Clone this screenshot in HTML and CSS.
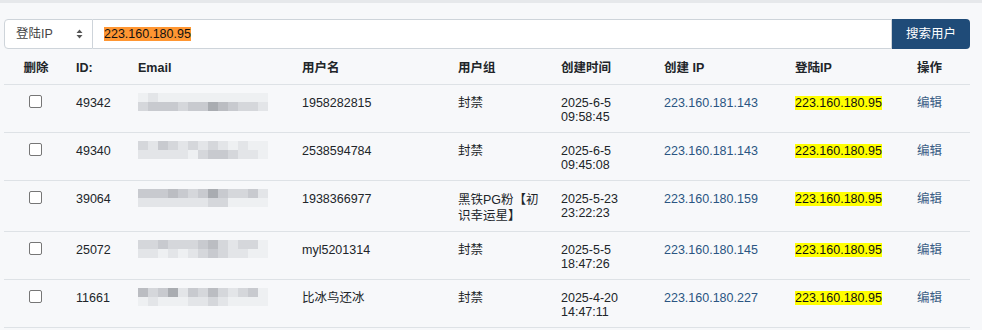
FILE: index.html
```html
<!DOCTYPE html>
<html lang="zh">
<head>
<meta charset="utf-8">
<title>用户搜索</title>
<link rel="stylesheet" href="styles.css">
</head>
<body>
<div class="page">
  <div class="search">
    <div class="select">
      <span>登陆IP</span>
      <svg class="arrows" width="7" height="10" viewBox="0 0 7 10"><path d="M3.5 0.5 L6.5 4 L0.5 4 Z M0.5 6 L6.5 6 L3.5 9.5 Z" fill="#555"/></svg>
    </div>
    <div class="input"><span class="hl-find">223.160.180.95</span></div>
    <button class="btn">搜索用户</button>
  </div>
  <table class="users">
    <colgroup>
      <col class="c-del"><col class="c-id"><col class="c-mail"><col class="c-name"><col class="c-group"><col class="c-time"><col class="c-cip"><col class="c-lip"><col class="c-op">
    </colgroup>
    <thead>
      <tr><th class="center">删除</th><th>ID:</th><th>Email</th><th>用户名</th><th>用户组</th><th>创建时间</th><th>创建 IP</th><th>登陆IP</th><th>操作</th></tr>
    </thead>
    <tbody>
      <tr>
        <td class="center"><span class="cb"></span></td>
        <td>49342</td>
        <td><div class="mosaic">
          <i class="g0"></i><i class="g1"></i><i class="g0"></i><i class="g0"></i><i class="g0"></i><i class="g0"></i><i class="g0"></i><i class="g0"></i><i class="g0"></i><i class="g0"></i><i class="g0"></i><i class="g0"></i><i class="g0"></i>
          <i class="g2"></i><i class="g3"></i><i class="g3"></i><i class="g3"></i><i class="g2"></i><i class="g3"></i><i class="g3"></i><i class="g5"></i><i class="g4"></i><i class="g3"></i><i class="g2"></i><i class="g2"></i><i class="g1"></i>
        </div></td>
        <td>1958282815</td>
        <td>封禁</td>
        <td>2025-6-5<br>09:58:45</td>
        <td class="cip">223.160.181.143</td>
        <td><span class="hl">223.160.180.95</span></td>
        <td><a class="link">编辑</a></td>
      </tr>
      <tr>
        <td class="center"><span class="cb"></span></td>
        <td>49340</td>
        <td><div class="mosaic">
          <i class="g2"></i><i class="g1"></i><i class="g3"></i><i class="g2"></i><i class="g1"></i><i class="g2"></i><i class="g1"></i><i class="g2"></i><i class="g1"></i><i class="g0"></i><i class="g1"></i><i class="g0"></i><i class="g0"></i>
          <i class="g1"></i><i class="g1"></i><i class="g1"></i><i class="g1"></i><i class="g1"></i><i class="g0"></i><i class="g2"></i><i class="g3"></i><i class="g3"></i><i class="g2"></i><i class="g1"></i><i class="g1"></i><i class="g0"></i>
        </div></td>
        <td>2538594784</td>
        <td>封禁</td>
        <td>2025-6-5<br>09:45:08</td>
        <td class="cip">223.160.181.143</td>
        <td><span class="hl">223.160.180.95</span></td>
        <td><a class="link">编辑</a></td>
      </tr>
      <tr class="tall">
        <td class="center"><span class="cb"></span></td>
        <td>39064</td>
        <td><div class="mosaic">
          <i class="g3"></i><i class="g3"></i><i class="g3"></i><i class="g4"></i><i class="g3"></i><i class="g2"></i><i class="g3"></i><i class="g5"></i><i class="g3"></i><i class="g2"></i><i class="g2"></i><i class="g3"></i><i class="g1"></i>
          <i class="g1"></i><i class="g1"></i><i class="g1"></i><i class="g1"></i><i class="g1"></i><i class="g1"></i><i class="g1"></i><i class="g2"></i><i class="g2"></i><i class="g0"></i><i class="g0"></i><i class="g0"></i><i class="g0"></i>
        </div></td>
        <td>1938366977</td>
        <td class="group2">黑铁PG粉【初识幸运星】</td>
        <td>2025-5-23<br>23:22:23</td>
        <td class="cip">223.160.180.159</td>
        <td><span class="hl">223.160.180.95</span></td>
        <td><a class="link">编辑</a></td>
      </tr>
      <tr>
        <td class="center"><span class="cb"></span></td>
        <td>25072</td>
        <td><div class="mosaic">
          <i class="g2"></i><i class="g2"></i><i class="g3"></i><i class="g2"></i><i class="g2"></i><i class="g2"></i><i class="g3"></i><i class="g4"></i><i class="g2"></i><i class="g1"></i><i class="g2"></i><i class="g2"></i><i class="g0"></i>
          <i class="g1"></i><i class="g1"></i><i class="g0"></i><i class="g1"></i><i class="g0"></i><i class="g1"></i><i class="g2"></i><i class="g3"></i><i class="g2"></i><i class="g1"></i><i class="g1"></i><i class="g0"></i><i class="g0"></i>
        </div></td>
        <td>myl5201314</td>
        <td>封禁</td>
        <td>2025-5-5<br>18:47:26</td>
        <td class="cip">223.160.180.145</td>
        <td><span class="hl">223.160.180.95</span></td>
        <td><a class="link">编辑</a></td>
      </tr>
      <tr>
        <td class="center"><span class="cb"></span></td>
        <td>11661</td>
        <td><div class="mosaic">
          <i class="g4"></i><i class="g2"></i><i class="g3"></i><i class="g5"></i><i class="g1"></i><i class="g3"></i><i class="g2"></i><i class="g4"></i><i class="g2"></i><i class="g1"></i><i class="g2"></i><i class="g3"></i><i class="g0"></i>
          <i class="g0"></i><i class="g1"></i><i class="g0"></i><i class="g0"></i><i class="g0"></i><i class="g1"></i><i class="g1"></i><i class="g2"></i><i class="g1"></i><i class="g0"></i><i class="g0"></i><i class="g0"></i><i class="g0"></i>
        </div></td>
        <td>比冰鸟还冰</td>
        <td>封禁</td>
        <td>2025-4-20<br>14:47:11</td>
        <td class="cip">223.160.180.227</td>
        <td><span class="hl">223.160.180.95</span></td>
        <td><a class="link">编辑</a></td>
      </tr>
    </tbody>
  </table>
</div>
</body>
</html>
```
FILE: styles.css
```css
* { box-sizing: border-box; }
html, body {
  margin: 0;
  padding: 0;
  background: #f7f8fa;
}
body {
  font-family: "Liberation Sans", Arial, "Noto Sans CJK SC", sans-serif;
  font-size: 12.5px;
  line-height: 14px;
  color: #212529;
  border-top: 3px solid #e6e8eb;
  height: 330px;
  overflow: hidden;
}
.page {
  padding: 16px 12px 0 4px;
}
.search {
  display: flex;
  height: 30px;
}
.select {
  width: 89px;
  flex: none;
  display: flex;
  align-items: center;
  justify-content: space-between;
  padding: 0 9px 0 11px;
  background: #fff;
  border: 1px solid #ced4da;
  border-radius: 4px 0 0 4px;
  color: #444;
}
.arrows { display: block; }
.input {
  flex: 1;
  display: flex;
  align-items: center;
  padding-left: 11px;
  background: #fff;
  border: 1px solid #ced4da;
  border-left: none;
}
.hl-find {
  background: #ff9632;
  color: #111;
}
.btn {
  flex: none;
  width: 78px;
  border: none;
  border-radius: 0 4px 4px 0;
  background: #1f4b78;
  color: #fff;
  font: inherit;
  font-size: 12.5px;
  padding: 0;
}
.users {
  width: 966px;
  table-layout: fixed;
  border-collapse: collapse;
}
.c-del { width: 64px; }
.c-id { width: 62px; }
.c-mail { width: 164px; }
.c-name { width: 156px; }
.c-group { width: 103px; }
.c-time { width: 103px; }
.c-cip { width: 131px; }
.c-lip { width: 122px; }
.c-op { width: 61px; }
.users th {
  text-align: left;
  font-weight: bold;
  padding: 12px 8px 9px;
  border-bottom: 1px solid #dee2e6;
  vertical-align: top;
}
.users td {
  padding: 11px 8px 8px;
  border-bottom: 1px solid #dee2e6;
  vertical-align: top;
  height: 46px;
}
.users .tall td { height: 51px; }
.users .group2 { line-height: 16px; padding-bottom: 3px; }
.users .center { text-align: center; padding-left: 0; padding-right: 0; }
.cb {
  display: inline-block;
  width: 13px;
  height: 13px;
  margin-top: -1px;
  margin-left: -1px;
  border: 1px solid #767676;
  border-radius: 2px;
  background: #fff;
  vertical-align: top;
}
.cip { color: #2a5582; }
.hl { background: #ffff00; color: #111; }
.link { color: #3a5d85; text-decoration: none; }
.mosaic {
  display: grid;
  grid-template-columns: repeat(13, 10px);
  grid-auto-rows: 9px;
  width: 130px;
  margin-top: -3px;
  filter: blur(0.6px);
}
.mosaic i { display: block; }
.g0 { background: #eef0f2; }
.g1 { background: #e3e5e8; }
.g2 { background: #d5d7db; }
.g3 { background: #c8cacf; }
.g4 { background: #bbbdc2; }
.g5 { background: #a9acb1; }
```
